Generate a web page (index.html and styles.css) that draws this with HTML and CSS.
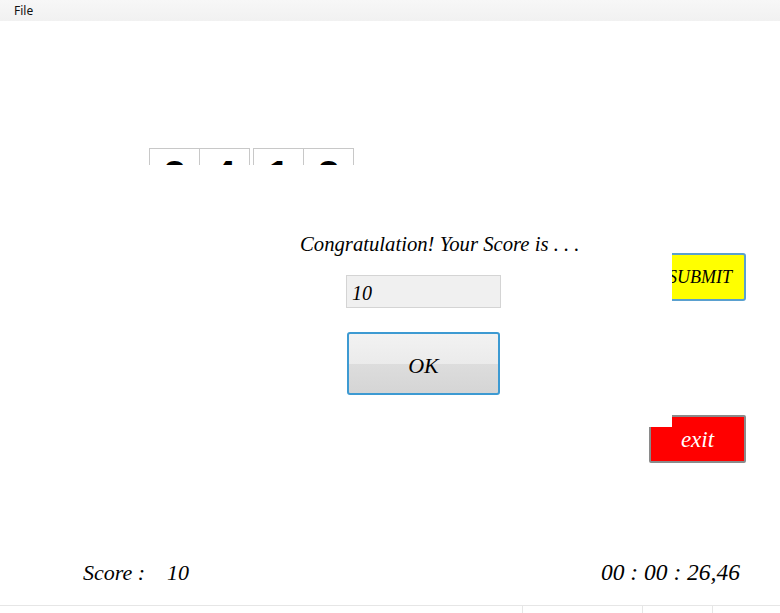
FILE: index.html
```
<!DOCTYPE html>
<html>
<head>
<meta charset="utf-8">
<link rel="stylesheet" href="styles.css">
</head>
<body>
<div class="menubar"><span class="menu-item">File</span></div>
<div class="main">
  <div class="game">
    <div class="digits">
      <div class="group">
        <div class="cell">2</div>
        <div class="cell">4</div>
      </div>
      <div class="group">
        <div class="cell">1</div>
        <div class="cell">2</div>
      </div>
    </div>
    <div class="actions">
      <button class="btn submit">SUBMIT</button>
      <button class="btn exit">exit</button>
    </div>
  </div>
  <div class="overlay">
    <div class="msg">Congratulation! Your Score is . . .</div>
    <div class="scorefield">10</div>
    <button class="ok">OK</button>
  </div>
  <div class="footer">
    <div class="score"><span class="lbl">Score :</span><span class="val">10</span></div>
    <div class="timer">00 : 00 : 26,46</div>
  </div>
</div>
<div class="statusbar">
  <div class="seg s1"></div>
  <div class="seg s2"></div>
  <div class="seg s3"></div>
  <div class="seg s4"></div>
</div>
</body>
</html>
```
FILE: styles.css
```
* { box-sizing: border-box; }
html, body { margin: 0; padding: 0; }
body {
  width: 780px;
  height: 613px;
  overflow: hidden;
  background: #fff;
  font-family: "Liberation Serif", serif;
  display: flex;
  flex-direction: column;
}
.menubar {
  height: 21px;
  background: linear-gradient(#f7f7f7, #f1f1f1);
  display: flex;
  align-items: center;
  padding-left: 14px;
  flex: none;
}
.menu-item {
  font-family: "Noto Sans", sans-serif;
  font-size: 12px;
  color: #111;
  line-height: 1;
}
.main {
  position: relative;
  height: 584px;
  flex: none;
}
.game {
  display: flex;
  justify-content: space-between;
  padding-left: 149px;
  padding-right: 34px;
}
.digits {
  margin-top: 127px;
  display: flex;
  gap: 3px;
  align-self: flex-start;
}
.group { display: flex; }
.cell {
  width: 51px;
  height: 50px;
  border: 1px solid #c8c8c8;
  margin-left: -1px;
  font-family: "Liberation Sans", sans-serif;
  font-weight: bold;
  font-size: 40px;
  text-align: center;
  line-height: 52px;
  color: #000;
  background: #fff;
}
.group .cell:first-child { margin-left: 0; }
.actions {
  display: flex;
  flex-direction: column;
  margin-top: 232px;
  gap: 114px;
}
.btn {
  width: 97px;
  height: 48px;
  font-family: "Liberation Serif", serif;
  font-style: italic;
  padding: 0;
  cursor: default;
}
.submit {
  background: #ffff00;
  border: 2px solid #5aa0cf;
  border-radius: 3px;
  color: #000;
  font-size: 18px;
  padding-left: 5px;
}
.exit {
  background: #ff0000;
  border: 2px solid #8a8a8a;
  border-radius: 2px;
  color: #fff;
  font-size: 23px;
  padding-top: 2px;
}
.overlay {
  position: absolute;
  left: 140px;
  top: 144px;
  width: 532px;
  height: 262px;
  background: #fff;
  display: flex;
  flex-direction: column;
  align-items: flex-start;
}
.msg {
  margin-top: 67px;
  margin-left: 160px;
  font-style: italic;
  font-size: 20.7px;
  color: #000;
  line-height: 24px;
}
.scorefield {
  margin-top: 19px;
  margin-left: 206px;
  width: 155px;
  height: 33px;
  background: #f0f0f0;
  border: 1px solid #d4d4d4;
  font-style: italic;
  font-size: 20px;
  padding-left: 5px;
  line-height: 34px;
}
.ok {
  margin-top: 24px;
  margin-left: 207px;
  width: 153px;
  height: 63px;
  border: 2px solid #3d9ad2;
  border-radius: 3px;
  background: linear-gradient(#f2f2f2 0%, #ebebeb 50%, #dddddd 50%, #d5d5d5 100%);
  font-family: "Liberation Serif", serif;
  font-style: italic;
  font-size: 22px;
  color: #000;
  padding: 5px 0 0 0;
}
.footer {
  position: absolute;
  left: 0;
  right: 0;
  bottom: 19px;
  display: flex;
  justify-content: space-between;
  align-items: baseline;
  padding-left: 83px;
  padding-right: 40px;
  font-style: italic;
  font-size: 22px;
  color: #000;
}
.score .val { margin-left: 22px; }
.timer { font-size: 23.5px; }
.statusbar {
  flex: 1;
  border-top: 1px solid #e6e6e6;
  display: flex;
}
.seg { border-right: 1px solid #e6e6e6; }
.s1 { width: 523px; }
.s2 { width: 120px; }
.s3 { width: 70px; }
.s4 { flex: 1; border-right: none; }
```
